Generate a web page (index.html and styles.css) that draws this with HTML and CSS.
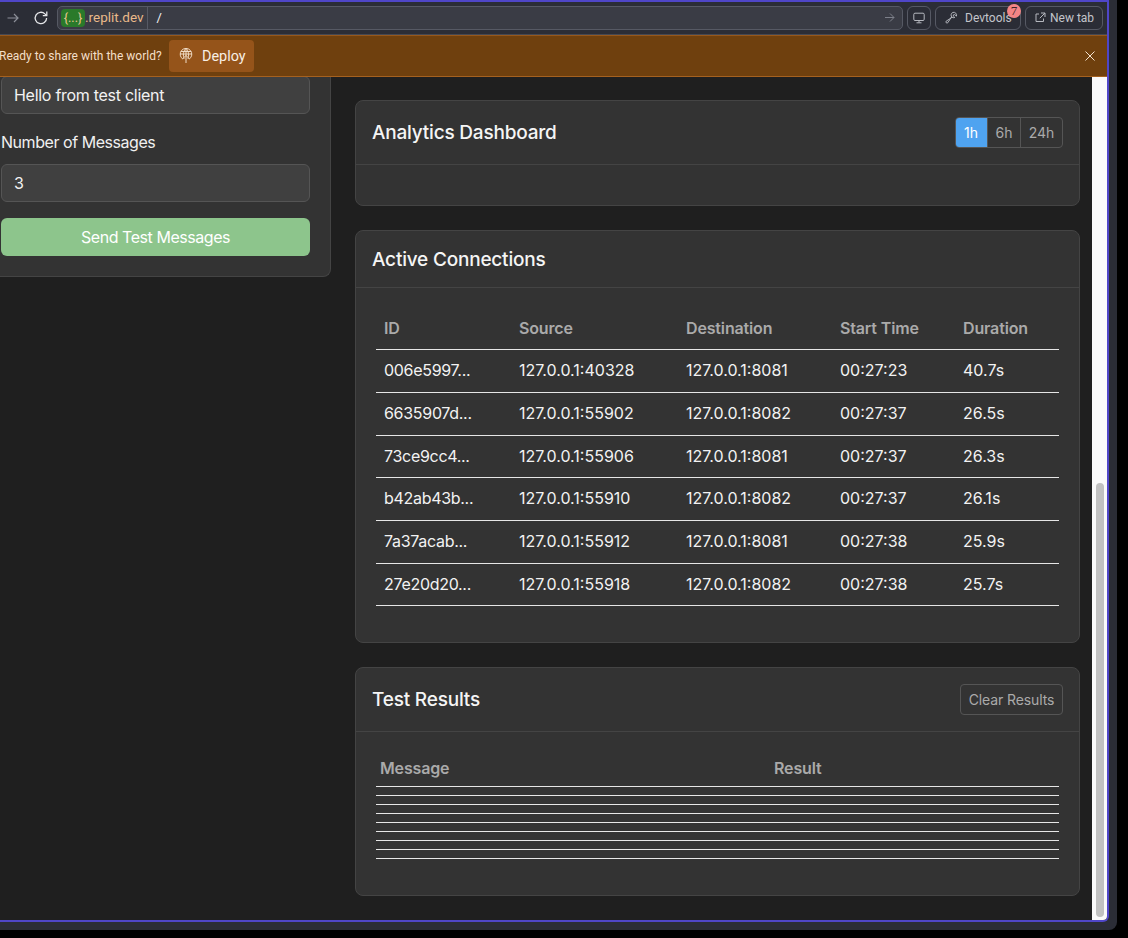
FILE: index.html
```html
<!DOCTYPE html>
<html lang="en">
<head>
<meta charset="utf-8">
<title>Analytics Dashboard</title>
<link rel="stylesheet" href="styles.css">
</head>
<body>
<div class="shell">
  <div class="frame">
    <header class="toolbar">
      <svg class="nav-forward" width="12" height="12" viewBox="0 0 12 12" fill="none" stroke="#8b8e98" stroke-width="1.2"><path d="M.5 6h10.500M7 2l4 4-4 4"/></svg>
      <svg class="nav-reload" width="16" height="16" viewBox="0 0 16 16" fill="none" stroke="#e4e5e8" stroke-width="1.3"><path d="M13.6 8a5.7 5.7 0 1 1-1.7-4.1l1.7 1.6"/><path d="M13.8 1.6v4h-4"/></svg>
      <div class="url-box">
        <span class="url-chip">{...}</span><span class="url-host">.replit.dev</span>
        <span class="url-path">/</span>
        <svg class="url-go" width="11" height="11" viewBox="0 0 11 11" fill="none" stroke="#7d808a" stroke-width="1"><path d="M1 5.500h9M6 1.500l4 4-4 4"/></svg>
      </div>
      <button class="tool-btn tool-icon" type="button" aria-label="Screen">
        <svg width="12" height="12" viewBox="0 0 12 12" fill="none" stroke="#b6b8bf" stroke-width="1"><rect x=".8" y="1.200" width="10.400" height="7.300" rx="1.200"/><path d="M6 8.500v2M3.500 10.800h5"/></svg>
      </button>
      <button class="tool-btn tool-dev" type="button">
        <svg width="13" height="13" viewBox="0 0 12 12" fill="none" stroke="#b6b8bf" stroke-width=".9"><path d="M7.300 1.300a2.700 2.700 0 0 1 3.300 3.400L9 3.300 7.900 3.500l-.3 1.100L9.100 6a2.700 2.700 0 0 1-3-.6L2.600 10.800a1 1 0 0 1-1.500-1.400l5.400-3.600a2.700 2.700 0 0 1 .8-4.500Z"/></svg>
        <span>Devtools</span>
        <span class="badge">7</span>
      </button>
      <button class="tool-btn tool-tab" type="button">
        <svg width="11" height="11" viewBox="0 0 11 11" fill="none" stroke="#b6b8bf" stroke-width="1"><path d="M8.500 6.500v3h-7.500v-7.500h3M6 1h4v4M10 1 4.800 6.200"/></svg>
        <span>New tab</span>
      </button>
    </header>
    <div class="banner">
      <span class="banner-text">Ready to share with the world?</span>
      <button class="deploy" type="button">
        <svg width="14" height="16" viewBox="0 0 14 16" fill="none" stroke="#f0dcc6" stroke-width="1"><path d="M4 11.200A5.800 5.800 0 1 1 10 11.200"/><path d="M1.300 6h11.400M1.800 3.500h10.400M7 .5v14.500M7 .5C4 3 4 8 5 11M7 .5c3 2.500 3 7.500 2 10.500M4.400 10 7 7.500 9.600 10"/></svg>
        <span>Deploy</span>
      </button>
      <svg class="banner-close" width="10" height="10" viewBox="0 0 10 10" fill="none" stroke="#f3e3d0" stroke-width="1"><path d="M.5.500l9 9M9.500.500l-9 9"/></svg>
    </div>
    <div class="viewport">
      <div class="page">
        <aside class="test-col">
          <form class="test-card">
            <input class="field" type="text" value="Hello from test client">
            <label class="field-label">Number of Messages</label>
            <input class="field" type="text" value="3">
            <button class="send" type="button">Send Test Messages</button>
          </form>
        </aside>
        <main class="main-col">
          <section class="card">
            <div class="card-head">
              <h2>Analytics Dashboard</h2>
              <div class="range">
                <button class="range-btn active" type="button">1h</button><button class="range-btn" type="button">6h</button><button class="range-btn" type="button">24h</button>
              </div>
            </div>
            <div class="card-body"></div>
          </section>
          <section class="card">
            <div class="card-head card-head-plain">
              <h2>Active Connections</h2>
            </div>
            <div class="card-body">
              <table class="conn">
                <colgroup><col class="c1"><col class="c2"><col class="c3"><col class="c4"><col class="c5"></colgroup>
                <thead><tr><th>ID</th><th>Source</th><th>Destination</th><th>Start Time</th><th>Duration</th></tr></thead>
                <tbody>
                  <tr><td>006e5997...</td><td>127.0.0.1:40328</td><td>127.0.0.1:8081</td><td>00:27:23</td><td>40.7s</td></tr>
                  <tr><td>6635907d...</td><td>127.0.0.1:55902</td><td>127.0.0.1:8082</td><td>00:27:37</td><td>26.5s</td></tr>
                  <tr><td>73ce9cc4...</td><td>127.0.0.1:55906</td><td>127.0.0.1:8081</td><td>00:27:37</td><td>26.3s</td></tr>
                  <tr><td>b42ab43b...</td><td>127.0.0.1:55910</td><td>127.0.0.1:8082</td><td>00:27:37</td><td>26.1s</td></tr>
                  <tr><td>7a37acab...</td><td>127.0.0.1:55912</td><td>127.0.0.1:8081</td><td>00:27:38</td><td>25.9s</td></tr>
                  <tr><td>27e20d20...</td><td>127.0.0.1:55918</td><td>127.0.0.1:8082</td><td>00:27:38</td><td>25.7s</td></tr>
                </tbody>
              </table>
            </div>
          </section>
          <section class="card">
            <div class="card-head">
              <h2>Test Results</h2>
              <button class="clear" type="button">Clear Results</button>
            </div>
            <div class="card-body">
              <table class="results">
                <colgroup><col class="r1"><col class="r2"></colgroup>
                <thead><tr><th>Message</th><th>Result</th></tr></thead>
                <tbody>
                  <tr><td></td><td></td></tr>
                  <tr><td></td><td></td></tr>
                  <tr><td></td><td></td></tr>
                  <tr><td></td><td></td></tr>
                  <tr><td></td><td></td></tr>
                  <tr><td></td><td></td></tr>
                  <tr><td></td><td></td></tr>
                  <tr><td></td><td></td></tr>
                </tbody>
              </table>
            </div>
          </section>
        </main>
      </div>
      <div class="scrollbar"><div class="thumb"></div></div>
    </div>
  </div>
</div>
</body>
</html>
```
FILE: styles.css
```css
* { box-sizing: border-box; }
html, body { margin: 0; height: 100%; overflow: hidden; }
body { background: #000; font-family: Inter, "Liberation Sans", sans-serif; color: #f2f2f2; }
button, input { font-family: inherit; }

.shell { width: 1117px; height: 930px; background: #2b2d36; border-bottom-right-radius: 8px; }
.frame {
  width: 1109px; height: 922px;
  border: 2px solid #4f46c8; border-left: 0;
  border-bottom-right-radius: 6px;
  display: flex; flex-direction: column; overflow: hidden;
}

/* browser toolbar */
.toolbar {
  height: 33px; flex: none; display: flex; align-items: center;
  background: #2b2d36; border-bottom: 1px solid #454852;
  padding: 0 4px 1px 0; font-family: Roboto, "Noto Sans", sans-serif;
}
.nav-forward { margin-left: 7px; flex: none; }
.nav-reload { margin-left: 14px; flex: none; }
.url-box {
  flex: 1; height: 24px; margin: 0 4px 0 8px; display: flex; align-items: center;
  background: #3a3c45; border: 1px solid #565964; border-radius: 5px;
  font-size: 12px; padding: 0 7px 0 3px;
}
.url-chip { background: #2a7a2a; color: #e9c48f; border-radius: 4px; width: 24px; height: 18px; line-height: 17px; text-align: center; font-size: 12.500px; }
.url-host { color: #e9b98a; font-size: 13.500px; padding-right: 3px; border-right: 1px solid #565964; height: 22px; line-height: 21px; }
.url-path { color: #f2f2f2; margin-left: 9px; flex: 1; font-size: 13px; }
.url-go { flex: none; }
.tool-btn {
  position: relative; height: 24px; display: flex; align-items: center;
  background: transparent; border: 1px solid #565964; border-radius: 6px;
  color: #c3c5cb; font-size: 12px; padding: 0; margin-right: 4px; font-family: Roboto, "Noto Sans", sans-serif;
}
.tool-btn:last-child { margin-right: 0; }
.tool-icon { width: 24px; justify-content: center; }
.tool-dev { width: 86px; padding-left: 9px; gap: 7px; }
.tool-tab { width: 78px; padding-left: 9px; gap: 4px; }
.badge {
  position: absolute; top: -3px; right: -1px; width: 14px; height: 14px; border-radius: 50%;
  background: #f38585; color: #3a2326; font-size: 13px; line-height: 14px; text-align: center;
  font-family: "Liberation Serif", serif;
}

/* deploy banner */
.banner {
  height: 42px; flex: none; display: flex; align-items: center;
  background: #6f400e; border-top: 1px solid #96571b; border-bottom: 1px solid #a5611f;
  font-family: Roboto, "Noto Sans", sans-serif; position: relative; z-index: 1; padding-right: 12px;
}
.banner-text { font-size: 12px; color: #f3dfc8; margin-left: -1px; width: 170px; white-space: nowrap; flex: none; }
.deploy {
  width: 85px; height: 32px; display: flex; align-items: center; gap: 9px; padding: 0 0 0 10px;
  background: #95541a; border: 0; border-radius: 4px; color: #f8efe5; font-size: 14.400px;
  font-family: Roboto, "Noto Sans", sans-serif;
}
.banner-close { margin-left: auto; flex: none; }

/* viewport */
.viewport { flex: 1; min-height: 0; display: flex; background: #1f1f1f; }
.page {
  flex: 1; min-width: 0; overflow: hidden;
  display: grid; grid-template-columns: 331px 1fr; column-gap: 24px; align-items: start;
  padding-right: 12px;
}
.scrollbar {
  width: 15px; flex: none; background: #fafafa; display: flex; flex-direction: column;
  justify-content: flex-end; align-items: center; padding-bottom: 3px;
}
.thumb { width: 8px; height: 434px; background: #c1c1c1; border-radius: 4px; }

/* test card */
.test-col { margin-top: -1px; }
.test-card {
  display: flex; flex-direction: column; background: #333;
  border-right: 1px solid #444; border-bottom: 1px solid #444;
  border-bottom-right-radius: 8px; padding: 0 20px 20px 1px;
}
.field {
  height: 38px; width: 100%; background: #404040; border: 1px solid #555; border-radius: 6px;
  color: #f2f2f2; font-size: 16px; padding: 0 12px; outline: none; letter-spacing: -.28px;
}
.field-label { font-size: 16px; line-height: 24px; margin: 16px 0 10px; color: #f0f0f0; letter-spacing: -.45px; }
.send {
  height: 38px; margin-top: 16px; background: #8dc58c; border: 0; border-radius: 6px;
  color: #fff; font-size: 16px; letter-spacing: -.45px;
}

/* main column */
.main-col { display: flex; flex-direction: column; gap: 24px; padding-top: 23px; }
.card { background: #333; border: 1px solid #444; border-radius: 8px; }
.card-head {
  display: flex; align-items: center; justify-content: space-between;
  padding: 16px; border-bottom: 1px solid #444;
}
.card-head-plain { padding: 17px 16px 15px; }
.card-head h2 { margin: 0; font-size: 19px; line-height: 24px; font-weight: 500; color: #f5f5f5; letter-spacing: -.2px; }
.card-body { padding: 20px; }
.card-body:empty { height: 40px; }

.range { display: flex; height: 31px; border: 1px solid #555; border-radius: 4px; overflow: hidden; }
.range-btn { background: transparent; border: 0; border-left: 1px solid #555; color: #aaa; font-size: 14px; padding: 0; width: 33px; }
.range-btn.active { background: #4fa3f0; color: #fff; border-left: 0; width: 32px; margin: -1px 0 -1px -1px; height: 31px; }
.range-btn:last-child { width: 42px; }
.clear {
  height: 31px; width: 103px; background: transparent; border: 1px solid #555; border-radius: 4px;
  color: #aaa; font-size: 14px; padding: 0; letter-spacing: -.1px;
}

/* tables */
table { width: 100%; border-collapse: collapse; table-layout: fixed; margin-bottom: 16px; }
th { text-align: left; color: #aaa; font-size: 16px; font-weight: 600; letter-spacing: -.15px; }
td { font-size: 16px; color: #f2f2f2; }
tr > * { border-bottom: 1px solid #e6e6e6; }
.conn th, .conn td { padding: 12px 8px; line-height: 17.600px; white-space: nowrap; }
.conn th { padding-bottom: 11px; }
.conn tbody tr:first-child td { padding-bottom: 13px; }
.conn td:first-child { letter-spacing: -.3px; }
.c1 { width: 135px; } .c2 { width: 167px; } .c3 { width: 154px; } .c4 { width: 123px; } .c5 { width: 104px; }
.results th { padding: 7px 4px 9px; line-height: 18px; }
.results td { padding: 4px; height: 9px; }
.r1 { width: 394px; } .r2 { width: 289px; }
```
